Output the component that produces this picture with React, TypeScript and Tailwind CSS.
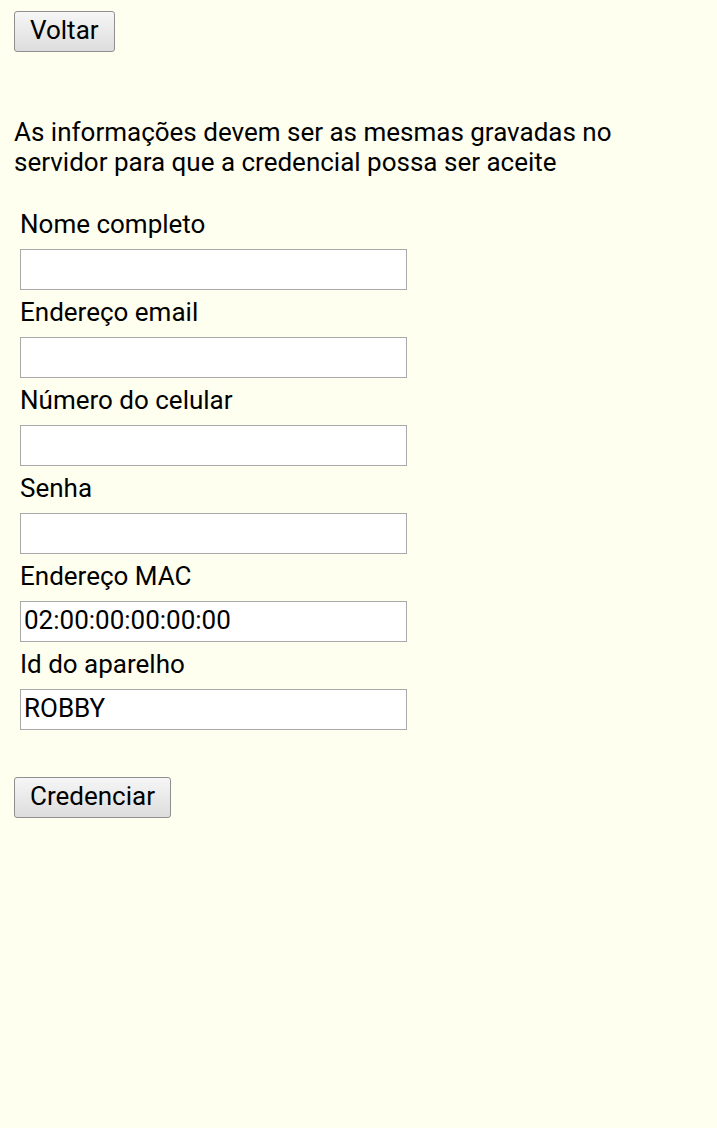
const FIELDS = [
  { label: 'Nome completo', value: '' },
  { label: 'Endereço email', value: '' },
  { label: 'Número do celular', value: '' },
  { label: 'Senha', value: '' },
  { label: 'Endereço MAC', value: '02:00:00:00:00:00' },
  { label: 'Id do aparelho', value: 'ROBBY' },
]

function OldButton({ children }: { children: React.ReactNode }) {
  return (
    <button className="h-[41px] px-[15px] pb-[4px] rounded-[3px] border border-[#8f8f8f] bg-gradient-to-b from-[#f6f6f6] to-[#dddddd] text-[26px] leading-none text-black">
      {children}
    </button>
  )
}

export default function App() {
  return (
    <div
      className="min-h-[1128px] bg-[#fffff0] px-[14px] pt-[11px] text-black"
      style={{ fontFamily: 'Roboto, "Liberation Sans", sans-serif' }}
    >
      <OldButton>Voltar</OldButton>
      <p className="mt-[65px] text-[26px] leading-[30px] w-[620px]">
        As informações devem ser as mesmas gravadas no servidor para que a credencial possa ser aceite
      </p>
      <div className="mt-[32px] ml-[6px] flex flex-col">
        {FIELDS.map(f => (
          <div key={f.label} className="flex flex-col">
            <label className="text-[26px] leading-[30px] h-[40px]">{f.label}</label>
            <input
              defaultValue={f.value}
              className="w-[387px] h-[41px] border border-[#a9a9a9] bg-white px-[3px] pb-[3px] text-[26px] mb-[7px] focus:outline-none"
            />
          </div>
        ))}
      </div>
      <div className="mt-[40px]">
        <OldButton>Credenciar</OldButton>
      </div>
    </div>
  )
}
